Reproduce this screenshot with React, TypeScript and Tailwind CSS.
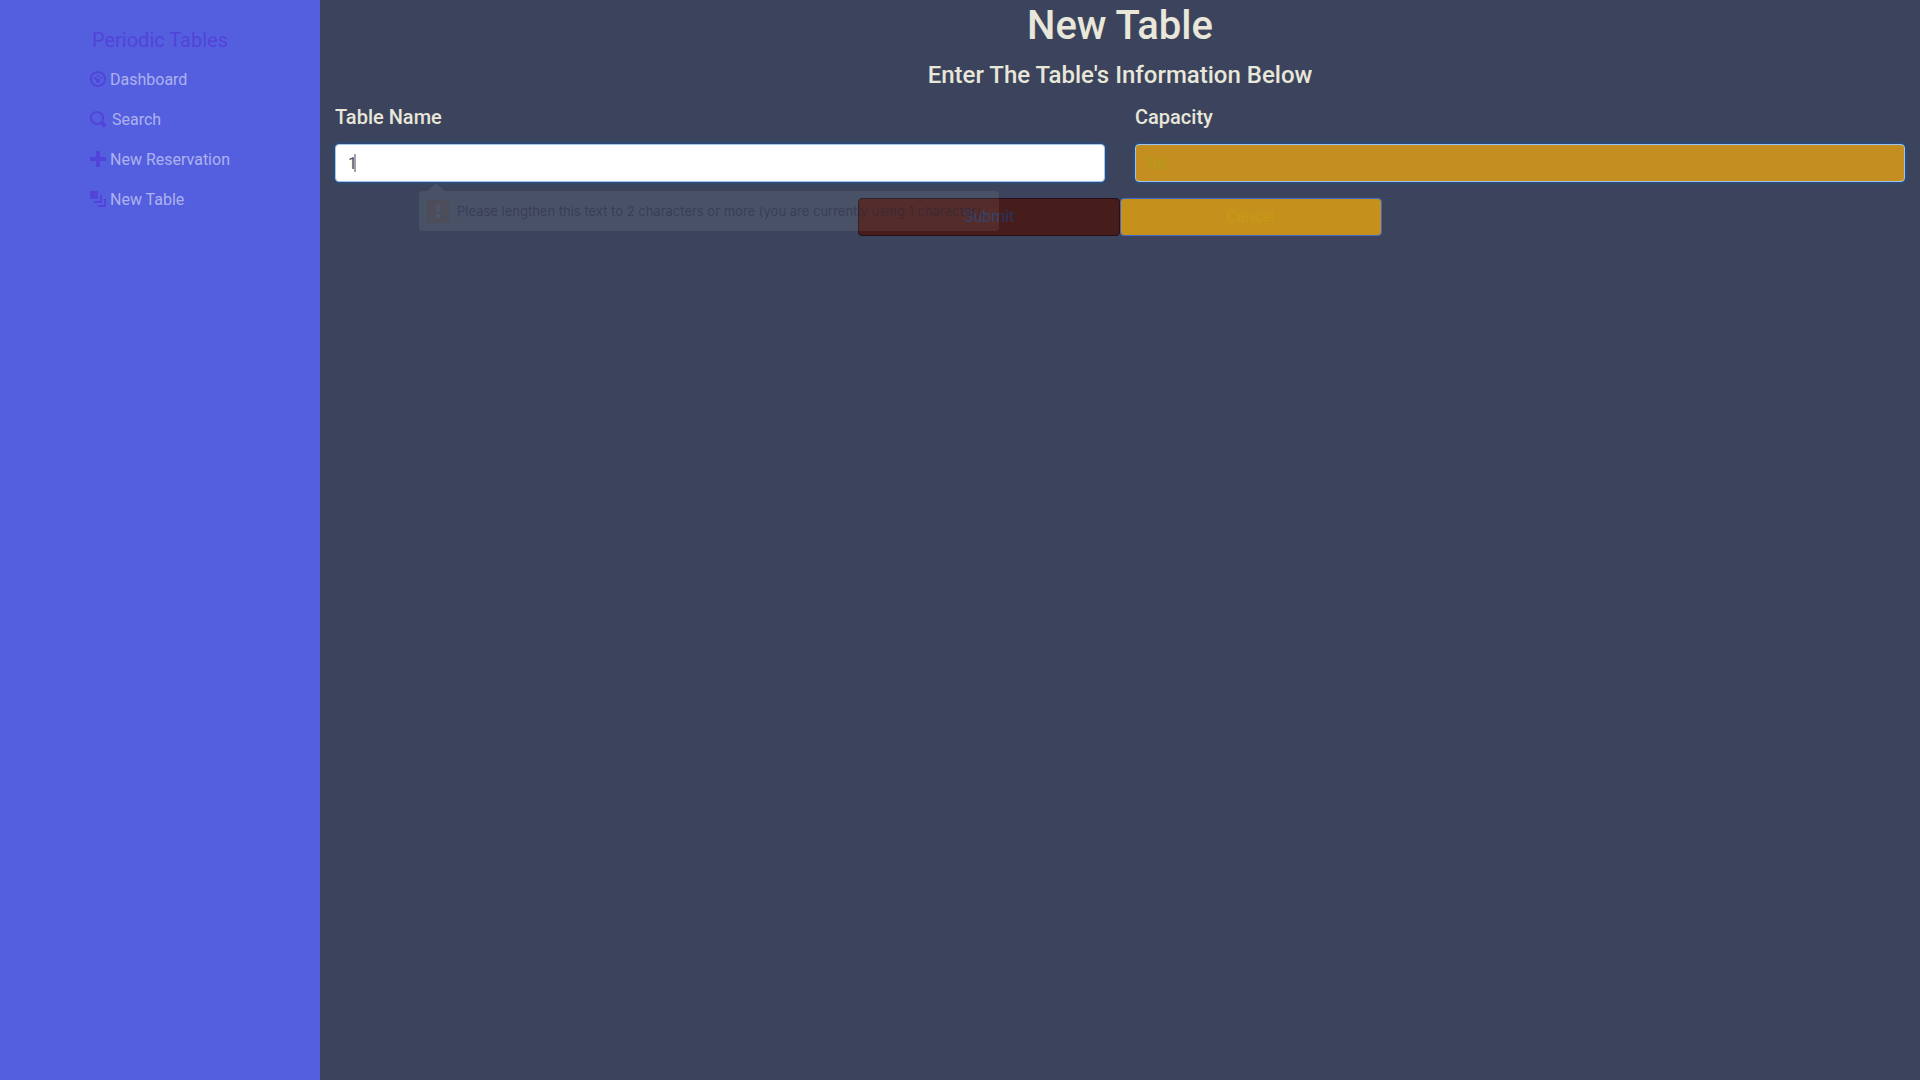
import type { ReactNode } from "react";

const icons = {
  dashboard:
    "M4 0c-2.2 0-4 1.8-4 4s1.8 4 4 4 4-1.8 4-4-1.8-4-4-4zm0 1c1.66 0 3 1.34 3 3s-1.34 3-3 3-3-1.34-3-3 1.34-3 3-3zm0 1c-.28 0-.5.22-.5.5s.22.5.5.5.5-.22.5-.5-.22-.5-.5-.5zm-1.66 1a.5.5 0 0 0-.19.84l.91.91c-.02.08-.06.16-.06.25 0 .55.45 1 1 1s1-.45 1-1-.45-1-1-1c-.09 0-.17.04-.25.06l-.91-.91a.5.5 0 0 0-.44-.16.5.5 0 0 0-.06 0zm3.16 0c-.28 0-.5.22-.5.5s.22.5.5.5.5-.22.5-.5-.22-.5-.5-.5z",
  search:
    "M3.5 0c-1.93 0-3.5 1.57-3.5 3.5s1.57 3.5 3.5 3.5c.59 0 1.17-.14 1.66-.41a1 1 0 0 0 .13.13l1 1a1.02 1.02 0 1 0 1.44-1.44l-1-1a1 1 0 0 0-.16-.13c.27-.49.44-1.06.44-1.66 0-1.93-1.55-3.5-3.5-3.5zm0 1c1.39 0 2.5 1.1 2.5 2.5 0 .66-.24 1.27-.66 1.72l-.03.03a1 1 0 0 0-.13.13c-.44.4-1.04.63-1.69.63-1.4 0-2.5-1.11-2.5-2.5s1.1-2.5 2.5-2.5z",
  plus: "M3 0v3h-3v2h3v3h2v-3h3v-2h-3v-3h-2z",
  layers: "M0 0v4h4v-4h-4zm5 2v3h-3v1h4v-4h-1zm2 2v3h-3v1h4v-4h-1z",
};

function NavLink({ icon, children }: { icon: keyof typeof icons; children: ReactNode }) {
  return (
    <li>
      <a href="#" className="flex items-center gap-1 px-4 py-2 text-base text-[#adb2ef]">
        <svg viewBox="0 0 8 8" className="mb-[2px] size-4 fill-[#5244d8]" aria-hidden="true">
          <path d={icons[icon]} />
        </svg>
        {children}
      </a>
    </li>
  );
}

function Sidebar() {
  return (
    <nav className="flex w-1/6 flex-col items-center bg-[#545fdf] pt-6">
      <a href="#" className="mb-1 text-xl leading-8 text-[#5244d8]">
        Periodic Tables
      </a>
      <ul>
        <NavLink icon="dashboard">Dashboard</NavLink>
        <NavLink icon="search">
          <span className="ml-[2px]">Search</span>
        </NavLink>
        <NavLink icon="plus">New Reservation</NavLink>
        <NavLink icon="layers">New Table</NavLink>
      </ul>
    </nav>
  );
}

function ValidationHint() {
  return (
    <div
      role="alert"
      className="absolute top-full left-[84px] mt-[9px] flex h-10 items-center gap-2 rounded bg-white/7 px-2 whitespace-nowrap"
    >
      <svg viewBox="0 0 16 8" className="absolute bottom-full left-[9px] h-2 w-4 fill-white/7" aria-hidden="true">
        <path d="M0 8 8 0l8 8z" />
      </svg>
      <span className="flex h-[23px] w-[22px] items-center justify-center rounded-xs bg-[#4d4c59]">
        <svg viewBox="0 0 6 14" className="h-[14px] w-[6px] fill-[#4c546b]" aria-hidden="true">
          <path d="M1 0h4v8H1zM1 10h4v4H1z" />
        </svg>
      </span>
      <span className="pt-px pr-[6px] font-['Inter',sans-serif] text-[13px] text-[#1b1f3f]/40">
        Please lengthen this text to 2 characters or more (you are currently using 1 character).
      </span>
    </div>
  );
}

const field =
  "h-[38px] w-full rounded border px-3 text-base outline-none shadow-[0_0_3px_1px_#23508c]";

export default function App() {
  return (
    <div className="flex min-h-screen bg-[#3b445c] font-['Roboto',sans-serif]">
      <Sidebar />
      <main className="min-w-0 flex-1 px-[15px] text-[#e9e6da]">
        <h1 className="mb-1 pt-[2px] text-center text-[40px] leading-[48px] font-medium">New Table</h1>
        <h2 className="mb-2 pt-[7px] text-center text-2xl leading-[29px] font-medium">
          Enter The Table's Information Below
        </h2>
        <form onSubmit={(e) => e.preventDefault()}>
          <div className="mb-4 grid grid-cols-2 gap-[30px] pt-[7px]">
            <div>
              <label htmlFor="table-name" className="mb-[15px] block text-xl leading-6 font-medium">
                Table Name
              </label>
              <div className="relative">
                <input
                  id="table-name"
                  defaultValue="1"
                  minLength={2}
                  className={`${field} border-[#a4c6ec] bg-white text-[#495057]`}
                />
                <span className="absolute top-[10px] left-[19px] h-[18px] w-[2px] bg-[#a3a3a3]" />
                <ValidationHint />
              </div>
            </div>
            <div>
              <label htmlFor="capacity" className="mb-[15px] block text-xl leading-6 font-medium">
                Capacity
              </label>
              <input
                id="capacity"
                defaultValue="06"
                className={`${field} border-[#9cc4f0] bg-[#c48f20] text-[#b39e15]`}
              />
            </div>
          </div>
          <div className="flex justify-center">
            <button type="submit" className="h-[38px] w-1/6 rounded border border-[#260f1b] bg-[#471d1b] text-base text-[#26345f]">
              Submit
            </button>
            <button type="button" className="h-[38px] w-1/6 rounded border border-[#3f68c8] bg-[#c6901c] text-base text-[#c79a17]">
              Cancel
            </button>
          </div>
        </form>
      </main>
    </div>
  );
}
